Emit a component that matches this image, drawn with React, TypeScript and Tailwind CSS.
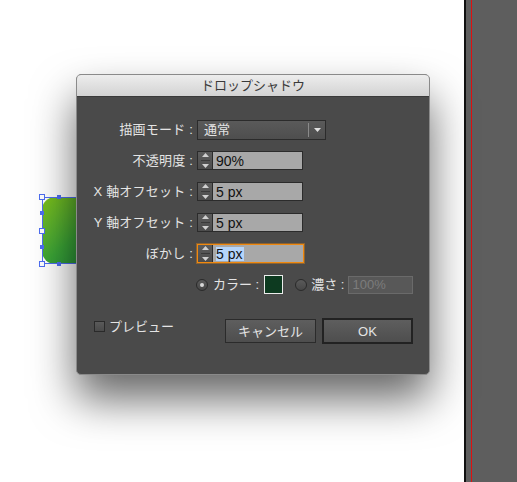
const font = "font-['Liberation_Sans','Noto_Sans_CJK_JP',sans-serif]";

function Spinner() {
  return (
    <div className="flex h-full w-[15px] flex-col items-center justify-center gap-[3px] border-r border-[#2b2b2b] bg-gradient-to-b from-[#5c5c5c] to-[#4c4c4c]">
      <svg width="7" height="4" viewBox="0 0 7 4"><path d="M3.5 0L7 4H0z" fill="#d0d0d0" /></svg>
      <div className="h-px w-[9px] bg-[#3a3a3a]" />
      <svg width="7" height="4" viewBox="0 0 7 4"><path d="M0 0h7L3.5 4z" fill="#d0d0d0" /></svg>
    </div>
  );
}

function NumField({ value, focused }: { value: string; focused?: boolean }) {
  return (
    <div
      className={
        focused
          ? "flex h-[19px] w-[107px] border border-[#f0890f] outline outline-1 outline-[#f0890f]/40"
          : "flex h-[19px] w-[106px] border border-[#2b2b2b]"
      }
    >
      <Spinner />
      <div className="flex flex-1 items-center bg-[#a8a8a8] pl-[3px] text-[14px] leading-none text-[#111]">
        {focused ? <span className="bg-[#b5d5fb] pr-[2px]">{value}</span> : value}
      </div>
    </div>
  );
}

function Row({ label, children }: { label: string; children: React.ReactNode }) {
  return (
    <div className="flex h-[19px] items-center">
      <div className="w-[116px] text-right text-[13px] tracking-[0.2px] text-[#e4e4e4]">{label}</div>
      <div className="ml-[4px]">{children}</div>
    </div>
  );
}

function Radio({ on }: { on?: boolean }) {
  return (
    <div className="flex h-[12px] w-[12px] items-center justify-center rounded-full border border-[#2a2a2a] bg-gradient-to-b from-[#5a5a5a] to-[#474747]">
      {on && <div className="h-[4px] w-[4px] rounded-full bg-[#d8d8d8]" />}
    </div>
  );
}

export default function App() {
  return (
    <div className={`flex h-[482px] w-[517px] overflow-hidden bg-white ${font}`}>
      <div className="relative flex-1">
        {/* green shape with selection */}
        <div className="absolute left-[42px] top-[197px] h-[67px] w-[80px] rounded-[13px] bg-gradient-to-br from-[#7cc015] via-[#3ba536] to-[#13823f]" />
        <div className="absolute left-[42px] top-[197px] h-[67px] w-[80px] border border-[#4e6ef2]" />
        <div className="absolute left-[39px] top-[194px] h-[6px] w-[6px] border border-[#4e6ef2] bg-white" />
        <div className="absolute left-[39px] top-[228px] h-[6px] w-[6px] border border-[#4e6ef2] bg-white" />
        <div className="absolute left-[39px] top-[261px] h-[6px] w-[6px] border border-[#4e6ef2] bg-white" />
        <div className="absolute left-[57px] top-[195px] h-[4px] w-[4px] bg-[#4e6ef2]" />
        <div className="absolute left-[57px] top-[262px] h-[4px] w-[4px] bg-[#4e6ef2]" />
        <div className="absolute left-[40px] top-[211px] h-[4px] w-[4px] bg-[#4e6ef2]" />
        <div className="absolute left-[40px] top-[245px] h-[4px] w-[4px] bg-[#4e6ef2]" />

        {/* dialog */}
        <div className="absolute left-[76px] top-[74px] flex h-[301px] w-[354px] flex-col overflow-hidden rounded-[5px] border border-[#8a8a8a] bg-[#4a4a4a] shadow-[0_24px_44px_rgba(0,0,0,0.6)]">
          <div className="flex h-[22px] items-center justify-center border-b border-[#3a3a3a] bg-gradient-to-b from-[#ededed] to-[#d3d3d3] text-[13px] text-[#3a3a3a]">
            ドロップシャドウ
          </div>
          <div className="flex flex-col gap-[12px] pt-[23px]">
            <Row label="描画モード :">
              <div className="flex h-[20px] w-[129px] items-center border border-[#2b2b2b] bg-gradient-to-b from-[#5a5a5a] to-[#4e4e4e]">
                <span className="flex-1 pl-[6px] text-[13px] text-[#e4e4e4]">通常</span>
                <div className="h-[14px] w-px bg-[#8a8a8a]" />
                <div className="flex w-[16px] justify-center">
                  <svg width="7" height="4" viewBox="0 0 7 4"><path d="M0 0h7L3.5 4z" fill="#e0e0e0" /></svg>
                </div>
              </div>
            </Row>
            <Row label="不透明度 :">
              <NumField value="90%" />
            </Row>
            <Row label="X 軸オフセット :">
              <NumField value="5 px" />
            </Row>
            <Row label="Y 軸オフセット :">
              <NumField value="5 px" />
            </Row>
            <Row label="ぼかし :">
              <NumField value="5 px" focused />
            </Row>
            <div className="flex h-[19px] items-center pl-[119px] text-[13px] text-[#e4e4e4]">
              <Radio on />
              <span className="ml-[5px]">カラー :</span>
              <div className="ml-[5px] h-[19px] w-[19px] border border-[#ececec] bg-[#0d3a20]" />
              <div className="ml-[12px]"><Radio /></div>
              <span className="ml-[4px]">濃さ :</span>
              <div className="ml-[4px] flex h-[18px] w-[65px] items-center border border-[#6a6a6a] bg-[#585858] pl-[3px] text-[13px] text-[#7c7c7c]">
                100%
              </div>
            </div>
          </div>
          <div className="mt-[23px] flex items-center pl-[17px] pr-[16px]">
            <div className="mb-[9px] h-[11px] w-[11px] border border-[#2a2a2a] bg-gradient-to-b from-[#5a5a5a] to-[#4a4a4a]" />
            <span className="mb-[9px] ml-[4px] text-[13px] text-[#e4e4e4]">プレビュー</span>
            <div className="ml-auto flex items-center gap-[6px]">
              <button className="flex h-[24px] w-[91px] items-center justify-center border border-[#2b2b2b] bg-gradient-to-b from-[#5e5e5e] to-[#4e4e4e] text-[13px] text-[#e4e4e4]">
                キャンセル
              </button>
              <button className="flex h-[26px] w-[91px] items-center justify-center border-2 border-[#222] bg-gradient-to-b from-[#5e5e5e] to-[#4e4e4e] text-[13px] text-[#e4e4e4]">
                OK
              </button>
            </div>
          </div>
        </div>
      </div>

      {/* right panel */}
      <div className="flex w-[53px] border-l-2 border-[#111] bg-[#5e5e5e]">
        <div className="ml-[5px] w-px bg-[#e01010]" />
      </div>
    </div>
  );
}
